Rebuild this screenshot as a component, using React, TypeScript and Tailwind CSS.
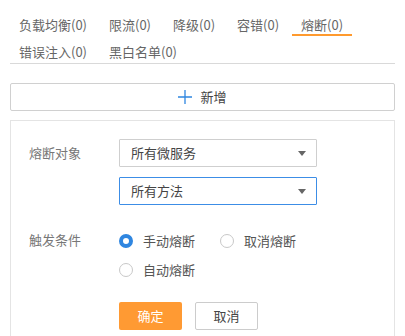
import { useState } from "react";

const tabs = [
  "负载均衡(0)",
  "限流(0)",
  "降级(0)",
  "容错(0)",
  "熔断(0)",
  "错误注入(0)",
  "黑白名单(0)",
];

const font = { fontFamily: '"Noto Sans CJK SC", "Noto Sans", sans-serif' };

function Select({ value, focused }: { value: string; focused?: boolean }) {
  return (
    <div
      className={`flex h-[28px] w-[198px] items-center justify-between rounded-[1px] border bg-white pl-[11px] pr-[10px] text-[13px] text-[#444] ${
        focused ? "border-[#3c8de6]" : "border-[#cfcfcf]"
      }`}
    >
      <span>{value}</span>
      <span className="h-0 w-0 border-x-[4px] border-t-[5px] border-x-transparent border-t-[#666]" />
    </div>
  );
}

function Radio({ label, checked, onClick }: { label: string; checked: boolean; onClick: () => void }) {
  return (
    <button type="button" onClick={onClick} className="flex h-[20px] items-center gap-[10px] text-[13px] text-[#555]">
      <span
        className={`h-[14px] w-[14px] rounded-full bg-white ${
          checked ? "border-[4px] border-[#2f86e0]" : "border border-[#c8c8c8]"
        }`}
      />
      <span>{label}</span>
    </button>
  );
}

export default function App() {
  const [active, setActive] = useState(4);
  const [mode, setMode] = useState("手动熔断");

  return (
    <div className="h-[336px] w-[405px] overflow-hidden bg-white px-[10px]" style={font}>
      <div className="flex flex-wrap gap-x-[4px] gap-y-[7px] border-b border-[#d9d9d9] pt-[16px]">
        {tabs.map((tab, i) => (
          <button
            key={tab}
            type="button"
            onClick={() => setActive(i)}
            className={`border-b-2 px-[9px] text-[13px] leading-[18px] text-[#666] ${
              i === active ? "border-[#ff9a2e]" : "border-transparent"
            }`}
          >
            {tab}
          </button>
        ))}
      </div>

      <button
        type="button"
        className="mt-[19px] flex h-[28px] w-full items-center justify-center gap-[8px] rounded-[2px] border border-[#d0d0d0] text-[13px] text-[#444]"
      >
        <svg width="14" height="14" viewBox="0 0 14 14">
          <path d="M7 0v14M0 7h14" stroke="#2f86e0" strokeWidth="1.3" fill="none" />
        </svg>
        <span>新增</span>
      </button>

      <div className="mt-[9px] h-[240px] border border-[#e4e4e4] px-[18px] pt-[18px]">
        <div className="flex">
          <div className="flex h-[28px] w-[90px] items-center text-[13px] text-[#777]">熔断对象</div>
          <div className="flex flex-col gap-[10px]">
            <Select value="所有微服务" />
            <Select value="所有方法" focused />
          </div>
        </div>

        <div className="mt-[26px] flex">
          <div className="flex h-[18px] w-[90px] items-center text-[13px] text-[#777]">触发条件</div>
          <div className="flex flex-1 flex-wrap gap-x-[25px] gap-y-[9px]">
            {["手动熔断", "取消熔断", "自动熔断"].map((m) => (
              <Radio key={m} label={m} checked={mode === m} onClick={() => setMode(m)} />
            ))}
          </div>
        </div>

        <div className="ml-[90px] mt-[22px] flex gap-[13px]">
          <button type="button" className="h-[28px] w-[63px] rounded-[2px] bg-[#ff9a33] text-[13px] text-white">
            确定
          </button>
          <button
            type="button"
            className="h-[28px] w-[63px] rounded-[2px] border border-[#cccccc] bg-white text-[13px] text-[#444]"
          >
            取消
          </button>
        </div>
      </div>
    </div>
  );
}
